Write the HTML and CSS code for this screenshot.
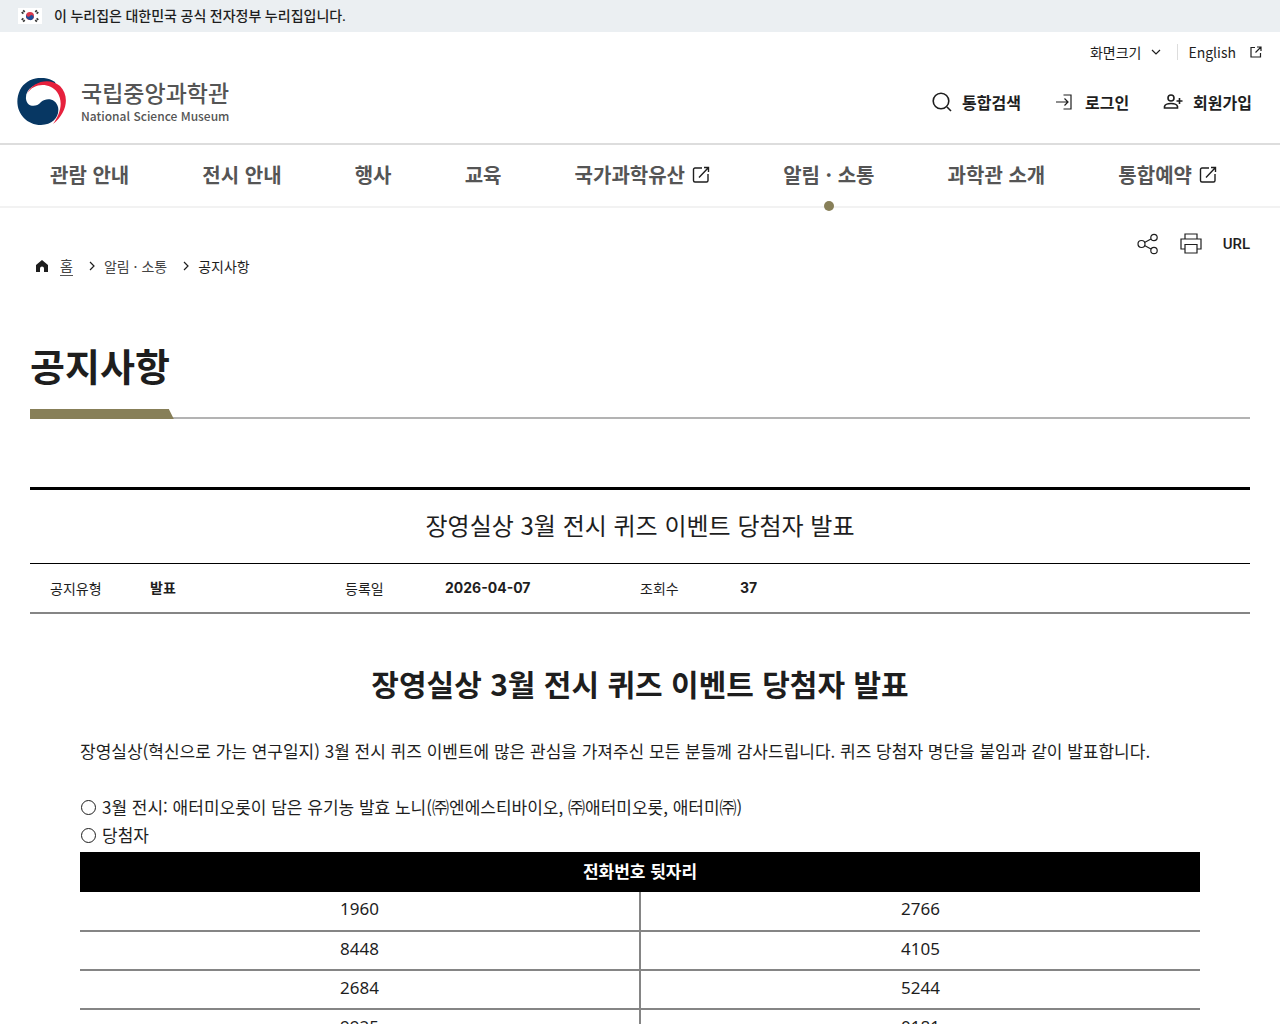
FILE: index.html
```html
<!DOCTYPE html>
<html lang="ko">
<head>
    <meta charset="UTF-8">
    <meta name="viewport" content="width=device-width, initial-scale=1.0">
    <title>공지사항 | 국립중앙과학관</title>
    <link rel="stylesheet" href="styles.css">
</head>
<body>

<!-- Government notice -->
<div class="gov-bar">
    <svg class="flag" viewBox="0 0 24 16" aria-hidden="true">
        <rect width="24" height="16" fill="#fff"/>
        <circle cx="12" cy="8" r="4" fill="#d8394c"/>
        <path d="M8.600 6a4 4 0 0 0 6.800 4.200A2 2 0 0 0 12 8 2 2 0 0 1 8.600 6z" fill="#1d4f9c"/>
        <path d="M4 5.500l2.500-3M17.500 2.500l2.500 3M4 10.500l2.500 3M17.500 13.500l2.500-3" stroke="#333" stroke-width="2.200" stroke-dasharray="1.700 .5"/>
    </svg>
    <span>이 누리집은 대한민국 공식 전자정부 누리집입니다.</span>
</div>

<header class="header">
    <div class="header-inner">
        <a class="logo" href="#">
            <svg class="logo-mark" viewBox="0 0 50 48" aria-hidden="true">
                <path d="M38 4C26-4 9 0 3 12-5 29 6 47 24 47c12 0 19-9 17-18-2-8-11-10-17-5-5 6-14 5-15-3C8 10 20 3 34 5c2 0 3 1 5 2z" fill="#073763"/>
                <path d="M10 16C15 3 33-1 43 8c10 10 7 27-7 38 7-10 11-22 4-32C33 5 17 4 10 16z" fill="#e6213d"/>
            </svg>
            <span class="logo-text">
                <strong>국립중앙과학관</strong>
                <span>National Science Museum</span>
            </span>
        </a>
        <div class="header-side">
            <div class="util">
                <button class="util-btn" type="button">화면크기
                    <svg class="ico-caret" viewBox="0 0 10 10" aria-hidden="true"><path d="M1 3l4 4 4-4"/></svg>
                </button>
                <a class="util-link" href="#">English
                    <svg class="ico-ext-sm" viewBox="0 0 12 12" aria-hidden="true"><path d="M5 1.500H1v9.500h9.500V7M7 1h4v4M11 1L5.500 6.500"/></svg>
                </a>
            </div>
            <div class="member">
                <button class="member-btn" type="button">
                    <svg class="ico-member" viewBox="0 0 20 20" aria-hidden="true"><circle cx="9" cy="9" r="7.800"/><path d="M15 15l4 4"/></svg>
                    통합검색
                </button>
                <a class="member-btn" href="#">
                    <svg class="ico-member thin" viewBox="0 0 20 20" aria-hidden="true"><path d="M1 10h12M9.500 6.500L13 10l-3.500 3.500M8.500 3H16v14H8.500"/></svg>
                    로그인
                </a>
                <a class="member-btn" href="#">
                    <svg class="ico-member" viewBox="0 0 20 20" aria-hidden="true"><circle cx="8" cy="6" r="3"/><path d="M1.500 16v-1.500c1-4 12-4 13 0V16zM16.500 6v6M13.500 9h6"/></svg>
                    회원가입
                </a>
            </div>
        </div>
    </div>
</header>

<nav class="gnb">
    <ul>
        <li><a href="#">관람 안내</a></li>
        <li><a href="#">전시 안내</a></li>
        <li><a href="#">행사</a></li>
        <li><a href="#">교육</a></li>
        <li><a href="#">국가과학유산 <svg class="ico-ext" viewBox="0 0 18 18" aria-hidden="true"><path d="M10 2H3a1.500 1.500 0 0 0-1.500 1.500v11A1.500 1.500 0 0 0 3 16h11.500a1.500 1.500 0 0 0 1.500-1.500V8M12 1.500h4.500V6M16.500 1.500L7 11.500"/></svg></a></li>
        <li class="on"><a href="#">알림 · 소통</a></li>
        <li><a href="#">과학관 소개</a></li>
        <li><a href="#">통합예약 <svg class="ico-ext" viewBox="0 0 18 18" aria-hidden="true"><path d="M10 2H3a1.500 1.500 0 0 0-1.500 1.500v11A1.500 1.500 0 0 0 3 16h11.500a1.500 1.500 0 0 0 1.500-1.500V8M12 1.500h4.500V6M16.500 1.500L7 11.500"/></svg></a></li>
    </ul>
</nav>

<main class="container">
    <div class="sub-top">
        <ol class="breadcrumb">
            <li>
                <svg class="ico-home" viewBox="0 0 12 12" aria-hidden="true"><path d="M6 0l6 5v7H8V8.500a2 2 0 0 0-4 0V12H0V5z"/></svg>
                <a class="home" href="#">홈</a>
            </li>
            <li><svg class="ico-sep" viewBox="0 0 6 10" aria-hidden="true"><path d="M1 1l4 4-4 4"/></svg><a href="#">알림 · 소통</a></li>
            <li class="current"><svg class="ico-sep" viewBox="0 0 6 10" aria-hidden="true"><path d="M1 1l4 4-4 4"/></svg><a href="#">공지사항</a></li>
        </ol>
        <div class="share">
            <button type="button" aria-label="공유">
                <svg class="ico-share" viewBox="0 0 22 22" aria-hidden="true"><circle cx="4.500" cy="11" r="3.500"/><circle cx="17" cy="4.500" r="3.200"/><circle cx="17" cy="17.500" r="3.200"/><path d="M7.500 9.500L14 6M7.500 12.500l6.500 3.500"/></svg>
            </button>
            <button type="button" aria-label="인쇄">
                <svg class="ico-share" viewBox="0 0 22 22" aria-hidden="true"><path d="M5 6V1h12v5M5 16H1V6h20v10h-4M5 11.500h12V20H5z"/></svg>
            </button>
            <button class="url" type="button">URL</button>
        </div>
    </div>

    <div class="page-title"><h1>공지사항</h1></div>

    <!-- Notice detail -->
    <article class="view">
        <h2 class="view-title">장영실상 3월 전시 퀴즈 이벤트 당첨자 발표</h2>
        <dl class="view-info">
            <div><dt>공지유형</dt><dd>발표</dd></div>
            <div><dt>등록일</dt><dd>2026-04-07</dd></div>
            <div><dt>조회수</dt><dd>37</dd></div>
        </dl>
        <div class="view-body">
            <h3>장영실상 3월 전시 퀴즈 이벤트 당첨자 발표</h3>
            <p>장영실상(혁신으로 가는 연구일지) 3월 전시 퀴즈 이벤트에 많은 관심을 가져주신 모든 분들께 감사드립니다. 퀴즈 당첨자 명단을 붙임과 같이 발표합니다.</p>
            <ul class="circle-list">
                <li>3월 전시: 애터미오롯이 담은 유기농 발효 노니(㈜엔에스티바이오, ㈜애터미오롯, 애터미㈜)</li>
                <li>당첨자</li>
            </ul>
            <table class="winners">
                <thead>
                    <tr><th colspan="2">전화번호 뒷자리</th></tr>
                </thead>
                <tbody>
                    <tr><td>1960</td><td>2766</td></tr>
                    <tr><td>8448</td><td>4105</td></tr>
                    <tr><td>2684</td><td>5244</td></tr>
                    <tr><td>9925</td><td>0181</td></tr>
                </tbody>
            </table>
        </div>
    </article>
</main>

</body>
</html>
```
FILE: styles.css
```css
* {
    box-sizing: border-box;
}

body {
    margin: 0;
    font-family: "Noto Sans CJK KR", sans-serif;
    font-size: 14px;
    line-height: 20px;
    color: #1e1e1e;
    background: #fff;
}

h1, h2, h3, p, ul, ol, dl, dd {
    margin: 0;
    padding: 0;
}

ul, ol {
    list-style: none;
}

a {
    color: inherit;
    text-decoration: none;
}

button {
    font: inherit;
    color: inherit;
    background: none;
    border: 0;
    padding: 0;
    cursor: pointer;
}

svg {
    flex: none;
    fill: none;
    stroke: #1e1e1e;
    stroke-width: 1.2;
}

/* Government notice */
.gov-bar {
    display: flex;
    align-items: center;
    gap: 12px;
    height: 32px;
    padding: 0 18px;
    background: #ebeff2;
    font-family: Lato, "Noto Sans CJK KR", sans-serif;
    font-weight: 500;
}

.flag {
    width: 24px;
    height: 16px;
    stroke: none;
}

/* Header */
.header {
    border-bottom: 2px solid #ddd;
}

.header-inner {
    display: flex;
    justify-content: space-between;
    height: 111px;
    padding: 0 18px 0 17px;
}

.logo {
    display: flex;
    align-items: center;
    gap: 14px;
    padding-top: 28px;
}

.logo-mark {
    width: 50px;
    height: 48px;
    stroke: none;
}

.logo-text {
    display: flex;
    flex-direction: column;
    color: #555;
    font-size: 12px;
    font-weight: 500;
}

.logo-text strong {
    font-size: 23px;
    font-weight: 500;
    line-height: 28px;
}

.header-side {
    display: flex;
    flex-direction: column;
    align-items: flex-end;
    gap: 30px;
    padding-top: 10px;
}

.util {
    display: flex;
    align-items: center;
}

.util-btn,
.util-link {
    display: flex;
    align-items: center;
}

.util-btn {
    gap: 10px;
    padding-right: 16px;
}

.util-link {
    gap: 14px;
    height: 16px;
    padding-left: 10px;
    border-left: 1px solid #ddd;
}

.ico-caret {
    width: 10px;
    height: 10px;
}

.ico-ext-sm {
    width: 12px;
    height: 12px;
}

.member {
    display: flex;
    gap: 34px;
    padding-right: 10px;
}

.member-btn {
    display: flex;
    align-items: center;
    gap: 10px;
    font-size: 16px;
    font-weight: 700;
}

.ico-member {
    width: 20px;
    height: 20px;
    stroke-width: 1.6;
}

.thin {
    stroke-width: 1.2;
}

/* Main menu */
.gnb {
    border-bottom: 2px solid #f2f2f2;
}

.gnb ul {
    display: flex;
    justify-content: space-between;
    padding: 0 63px 0 50px;
}

.gnb li {
    position: relative;
}

.gnb a {
    display: flex;
    align-items: center;
    gap: 7px;
    height: 61px;
    padding-bottom: 2px;
    font-size: 20px;
    font-weight: 700;
    color: #555;
}

.gnb .on::after {
    content: "";
    position: absolute;
    left: 50%;
    bottom: -5px;
    width: 10px;
    height: 10px;
    margin-left: -5px;
    border-radius: 50%;
    background: #877f58;
}

.ico-ext {
    width: 18px;
    height: 18px;
    stroke-width: 1.4;
}

/* Breadcrumb and share buttons */
.container {
    padding: 0 30px;
}

.sub-top {
    display: flex;
    justify-content: space-between;
    align-items: flex-start;
    padding-top: 25px;
}

.breadcrumb {
    display: flex;
    gap: 16px;
    padding: 22px 6px 0;
    color: #444;
}

.breadcrumb li {
    display: flex;
    align-items: center;
    gap: 9px;
}

.breadcrumb .current {
    color: #1e1e1e;
}

.breadcrumb .home {
    border-bottom: 1px solid #555;
    margin-left: 3px;
}

.ico-home {
    width: 12px;
    height: 12px;
    fill: #1e1e1e;
    stroke: none;
}

.ico-sep {
    width: 6px;
    height: 10px;
}

.share {
    display: flex;
    align-items: center;
    gap: 21px;
}

.share button {
    display: flex;
}

.ico-share {
    width: 22px;
    height: 22px;
}

.share .url {
    font-family: Roboto, sans-serif;
    font-size: 15px;
    font-weight: 500;
}

/* Page title */
.page-title {
    margin-top: 61px;
    border-bottom: 2px solid #b3b3b3;
}

.page-title h1 {
    position: relative;
    display: inline-block;
    padding: 0 4px 24px 0;
    font-size: 38px;
    line-height: 56px;
    vertical-align: top;
}

.page-title h1::after {
    content: "";
    position: absolute;
    left: 0;
    bottom: -2px;
    width: 100%;
    height: 10px;
    background: #877f58;
    clip-path: polygon(0 0, calc(100% - 5px) 0, 100% 100%, 0 100%);
}

/* Notice detail */
.view {
    margin-top: 68px;
    border-top: 3px solid #000;
}

.view-title {
    padding: 19px 0 22px;
    border-bottom: 1px solid #000;
    font-size: 24px;
    font-weight: 400;
    line-height: 32px;
    text-align: center;
}

.view-info {
    display: flex;
    padding: 14px 20px;
    border-bottom: 2px solid #858585;
}

.view-info div {
    display: flex;
    width: 295px;
}

.view-info dt {
    width: 100px;
}

.view-info dd {
    font-family: Inter, "Noto Sans CJK KR", sans-serif;
    font-weight: 700;
}

.view-body {
    padding: 48px 50px;
    font-size: 17px;
    line-height: 28px;
}

.view-body h3 {
    margin-bottom: 33px;
    font-size: 30px;
    line-height: 42px;
    text-align: center;
}

.circle-list {
    margin-top: 28px;
}

.circle-list li {
    display: flex;
    align-items: center;
    gap: 6px;
}

.circle-list li::before {
    content: "";
    width: 13px;
    height: 13px;
    flex: none;
    margin-left: 1px;
    border: 1px solid #1e1e1e;
    border-radius: 50%;
}

.winners {
    width: 100%;
    margin-top: 3px;
    border-collapse: collapse;
    table-layout: fixed;
    text-align: center;
}

.winners th {
    height: 40px;
    padding: 0 0 3px;
    background: #000;
    color: #fff;
}

.winners td {
    height: 39px;
    padding: 0 0 4px;
    border-bottom: 2px solid #858585;
    font-family: "Noto Sans", sans-serif;
}

.winners td + td {
    border-left: 2px solid #858585;
}
```
